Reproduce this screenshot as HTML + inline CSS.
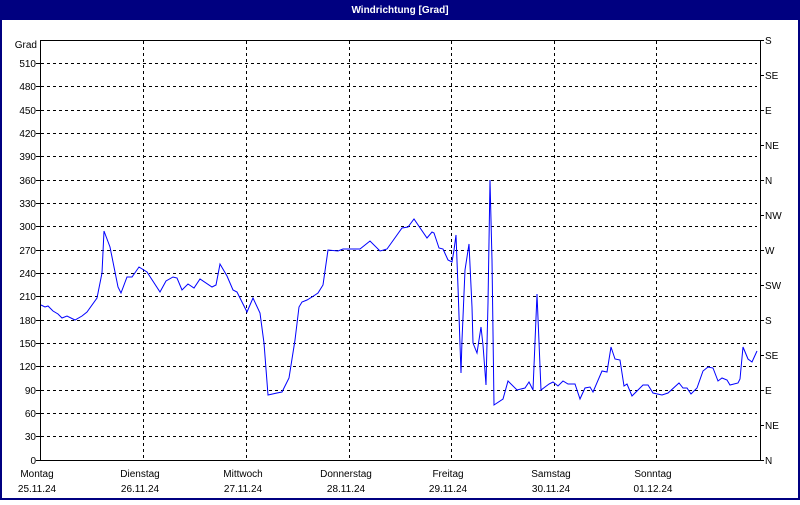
<!DOCTYPE html>
<html><head><meta charset="utf-8"><style>
body{margin:0;width:800px;height:500px;overflow:hidden;background:#fff;font-family:"Liberation Sans",sans-serif}
</style></head><body>
<svg width="800" height="500" xmlns="http://www.w3.org/2000/svg" font-family="Liberation Sans, sans-serif" font-size="10">
<rect x="0" y="0" width="800" height="500" fill="#000080"/>
<rect x="2" y="20" width="796" height="478" fill="#fff"/>
<text x="400" y="13" fill="#fff" font-weight="bold" text-anchor="middle" font-size="10">Windrichtung [Grad]</text>
<g stroke="#000" stroke-dasharray="3,3" stroke-width="1">
<line x1="41" x2="757" y1="63.5" y2="63.5"/><line x1="41" x2="757" y1="86.5" y2="86.5"/><line x1="41" x2="757" y1="110.5" y2="110.5"/><line x1="41" x2="757" y1="133.5" y2="133.5"/><line x1="41" x2="757" y1="156.5" y2="156.5"/><line x1="41" x2="757" y1="180.5" y2="180.5"/><line x1="41" x2="757" y1="203.5" y2="203.5"/><line x1="41" x2="757" y1="226.5" y2="226.5"/><line x1="41" x2="757" y1="250.5" y2="250.5"/><line x1="41" x2="757" y1="273.5" y2="273.5"/><line x1="41" x2="757" y1="296.5" y2="296.5"/><line x1="41" x2="757" y1="320.5" y2="320.5"/><line x1="41" x2="757" y1="343.5" y2="343.5"/><line x1="41" x2="757" y1="366.5" y2="366.5"/><line x1="41" x2="757" y1="390.5" y2="390.5"/><line x1="41" x2="757" y1="413.5" y2="413.5"/><line x1="41" x2="757" y1="436.5" y2="436.5"/>
<line x1="143.5" x2="143.5" y1="41" y2="460"/><line x1="246.5" x2="246.5" y1="41" y2="460"/><line x1="349.5" x2="349.5" y1="41" y2="460"/><line x1="451.5" x2="451.5" y1="41" y2="460"/><line x1="554.5" x2="554.5" y1="41" y2="460"/><line x1="656.5" x2="656.5" y1="41" y2="460"/>
</g>
<g stroke="#000" stroke-width="1" fill="none">
<path d="M40.5 40.5H760.5V460.5H40.5Z"/>
<path d="M760 75.5h4M760 110.5h4M760 145.5h4M760 180.5h4M760 215.5h4M760 250.5h4M760 285.5h4M760 320.5h4M760 355.5h4M760 390.5h4M760 425.5h4M760 40.5h4M760 460.5h4"/>
<path d="M36 63.5h4M36 86.5h4M36 110.5h4M36 133.5h4M36 156.5h4M36 180.5h4M36 203.5h4M36 226.5h4M36 250.5h4M36 273.5h4M36 296.5h4M36 320.5h4M36 343.5h4M36 366.5h4M36 390.5h4M36 413.5h4M36 436.5h4M36 460.5h4"/>
</g>
<g text-anchor="end" fill="#000">
<text x="37" y="48">Grad</text>
<text x="36" y="67">510</text><text x="36" y="90">480</text><text x="36" y="114">450</text><text x="36" y="137">420</text><text x="36" y="160">390</text><text x="36" y="184">360</text><text x="36" y="207">330</text><text x="36" y="230">300</text><text x="36" y="254">270</text><text x="36" y="277">240</text><text x="36" y="300">210</text><text x="36" y="324">180</text><text x="36" y="347">150</text><text x="36" y="370">120</text><text x="36" y="394">90</text><text x="36" y="417">60</text><text x="36" y="440">30</text><text x="36" y="464">0</text>
</g>
<g fill="#000">
<text x="765" y="44">S</text><text x="765" y="79">SE</text><text x="765" y="114">E</text><text x="765" y="149">NE</text><text x="765" y="184">N</text><text x="765" y="219">NW</text><text x="765" y="254">W</text><text x="765" y="289">SW</text><text x="765" y="324">S</text><text x="765" y="359">SE</text><text x="765" y="394">E</text><text x="765" y="429">NE</text><text x="765" y="464">N</text>
</g>
<g text-anchor="middle" fill="#000">
<text x="37" y="477">Montag</text><text x="37" y="492">25.11.24</text>
<text x="140" y="477">Dienstag</text><text x="140" y="492">26.11.24</text>
<text x="243" y="477">Mittwoch</text><text x="243" y="492">27.11.24</text>
<text x="346" y="477">Donnerstag</text><text x="346" y="492">28.11.24</text>
<text x="448" y="477">Freitag</text><text x="448" y="492">29.11.24</text>
<text x="551" y="477">Samstag</text><text x="551" y="492">30.11.24</text>
<text x="653" y="477">Sonntag</text><text x="653" y="492">01.12.24</text>
</g>
<polyline fill="none" stroke="#0000ff" stroke-width="1" points="41,305 45,307 48,306 53,311 58,314 62,318 67,316 75,320 82,316 87,312 97,298 102,273 104,231 110,247 118,287 121,293 127,277 132,277 139,267 147,272 160,292 166,281 173,277 177,278 182,290 188,284 194,288 200,279 212,287 216,285 220,264 227,276 233,290 237,292 247,312 253,298 260,313 264,343 268,395 277,393 282,392 289,378 295,340 299,307 302,302 307,300 312,297 318,293 323,285 328,250 338,251 343,249 360,249 370,241 380,251 387,249 392,242 402,228 408,227 414,219 427,238 432,232 434,233 439,248 443,249 448,260 452,262 454,250 456,235 458,287 461,373 462,340 463,317 465,270 469,244 472,307 473,343 477,353 481,327 483,345 486,385 488,303 490,180 492,260 494,405 503,399 508,381 517,390 525,388 529,382 533,390 537,294 541,390 549,384 553,382 558,386 563,381 568,384 575,384 580,399 585,388 590,387 593,392 602,371 607,372 611,347 615,359 620,360 624,386 627,384 632,396 643,385 648,385 653,393 662,395 668,393 679,383 683,388 687,388 691,394 697,388 703,371 708,367 713,368 718,381 722,378 727,380 730,385 738,383 740,379 743,347 748,359 752,362 757,351"/>
</svg>
</body></html>
